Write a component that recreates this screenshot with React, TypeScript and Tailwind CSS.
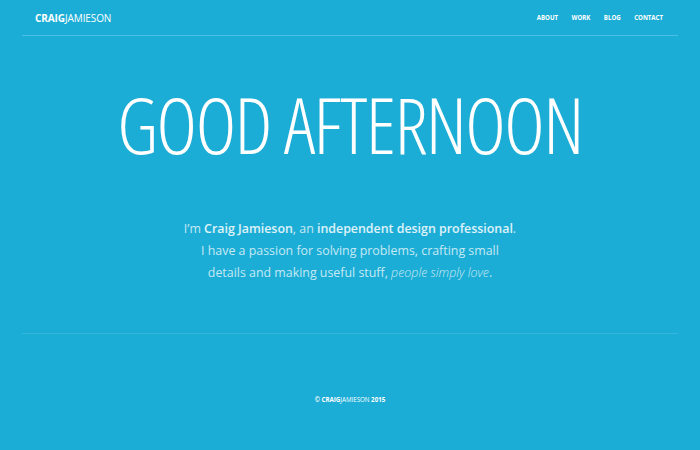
import React from "react";

export default function App() {
  return (
    <div className="w-[700px] h-[450px] bg-[#1cadd6] text-white font-['Open_Sans',sans-serif] flex flex-col">
      {/* Header */}
      <header className="mx-[22px] h-[36px] border-b border-[#4cc0e0] flex items-center justify-between px-[13px] pt-[1px]">
        <div className="text-[10px] tracking-[-0.1px] leading-none">
          <span className="font-bold">CRAIG</span>
          <span>JAMIESON</span>
        </div>
        <nav className="flex gap-[13.5px] text-[6.1px] font-bold leading-none mr-[2px]">
          <a>ABOUT</a>
          <a>WORK</a>
          <a>BLOG</a>
          <a>CONTACT</a>
        </nav>
      </header>

      {/* Hero */}
      <section className="flex flex-col items-center">
        <h1 className="mt-[50px] text-[77px] font-light leading-none [font-stretch:75%] tracking-[-1.4px]">
          GOOD AFTERNOON
        </h1>
        <p className="mt-[55px] text-[12.4px] leading-[22px] text-center text-white/75">
          I’m <strong className="font-semibold text-white/85">Craig Jamieson</strong>, an{" "}
          <strong className="font-semibold text-white/85">independent design professional</strong>.
          <br />
          I have a passion for solving problems, crafting small
          <br />
          details and making useful stuff, <em className="font-light">people simply love</em>.
        </p>
      </section>

      <div className="mx-[22px] mt-[49px] border-b border-[#34b6dc]" />

      {/* Footer */}
      <footer className="mt-[63px] text-center text-[6.2px] font-bold leading-none">
        © CRAIG<span className="font-normal">JAMIESON</span> 2015
      </footer>
    </div>
  );
}
